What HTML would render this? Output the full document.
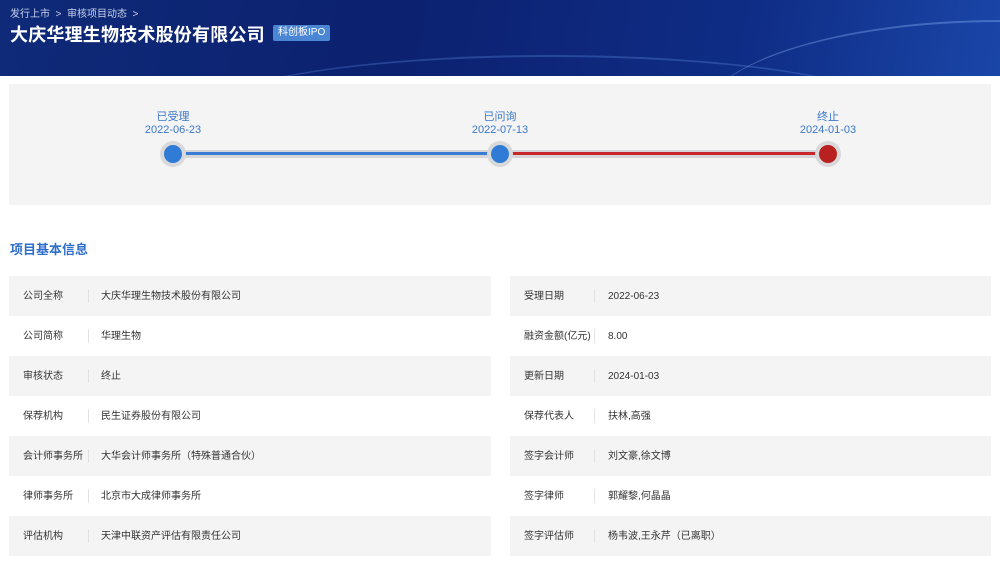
<!DOCTYPE html>
<html><head><meta charset="utf-8"><style>
*{margin:0;padding:0;box-sizing:border-box}
body{width:1000px;height:567px;overflow:hidden;background:#fff;font-family:"Liberation Sans","Noto Sans CJK SC",sans-serif;position:relative}
.hdr{position:absolute;left:0;top:0;width:1000px;height:76px;background:linear-gradient(100deg,#0e2a78 0%,#0c2170 40%,#0f2d86 75%,#1a46a8 100%);overflow:hidden}
.hdr .wave{position:absolute;border-radius:50%;border-top:2px solid rgba(120,170,255,.25)}
.bc{position:absolute;left:10px;top:5px;font-size:10px;color:#c8d2ee}
.title{position:absolute;left:10px;top:21px;font-size:18px;font-weight:bold;color:#fff;letter-spacing:0.2px}
.tag{position:absolute;left:273px;top:25px;height:16px;padding:0 5px;background:#4a86d4;color:#fff;font-size:10px;line-height:16px;border-radius:2px}
.tl{position:absolute;left:9px;top:84px;width:982px;height:121px;background:#f4f4f5}
.lab{position:absolute;font-size:11px;color:#3a77c9;text-align:center;line-height:13px;width:100px}
.band{position:absolute;top:150px;height:8px;background:#d6d6d8}
.line{position:absolute;top:152px;height:3px}
.dot{position:absolute;width:18px;height:18px;border-radius:50%;top:145px;box-shadow:0 0 0 4px #d9d9db}
.sec{position:absolute;left:10px;top:239px;font-size:13px;font-weight:bold;color:#2f6fca}
.row{position:absolute;height:40px;font-size:10px;color:#333;line-height:42px}
.row.s{background:#f4f4f4}
.row .k{position:absolute;left:14px}
.row .d{position:absolute;top:13px;width:1px;height:14px;background:#e2e2e2}
.row .v{position:absolute}
</style></head><body>
<div class="hdr">
<div class="wave" style="left:200px;top:55px;width:700px;height:120px"></div>
<div class="wave" style="left:700px;top:20px;width:600px;height:200px;border-top-color:rgba(150,190,255,.35)"></div>
<div class="bc">发行上市 &nbsp;&gt;&nbsp; 审核项目动态 &nbsp;&gt;</div>
<div class="title">大庆华理生物技术股份有限公司</div>
<div class="tag">科创板IPO</div>
</div>
<div class="tl"></div>
<div class="lab" style="left:123px;top:111px">已受理<br>2022-06-23</div>
<div class="lab" style="left:450px;top:111px">已问询<br>2022-07-13</div>
<div class="lab" style="left:778px;top:111px">终止<br>2024-01-03</div>
<div class="band" style="left:170px;width:660px"></div>
<div class="line" style="left:173px;width:327px;background:#3a7bd5"></div>
<div class="line" style="left:500px;width:328px;background:#c9262c"></div>
<div class="dot" style="left:164px;background:#2f7bd6"></div>
<div class="dot" style="left:491px;background:#2f7bd6"></div>
<div class="dot" style="left:819px;background:#b8211f"></div>
<div class="sec">项目基本信息</div>

<div class="row s" style="left:9px;top:276px;width:482px"><span class="k">公司全称</span><span class="d" style="left:79px"></span><span class="v" style="left:92px">大庆华理生物技术股份有限公司</span></div>
<div class="row" style="left:9px;top:316px;width:482px"><span class="k">公司简称</span><span class="d" style="left:79px"></span><span class="v" style="left:92px">华理生物</span></div>
<div class="row s" style="left:9px;top:356px;width:482px"><span class="k">审核状态</span><span class="d" style="left:79px"></span><span class="v" style="left:92px">终止</span></div>
<div class="row" style="left:9px;top:396px;width:482px"><span class="k">保荐机构</span><span class="d" style="left:79px"></span><span class="v" style="left:92px">民生证券股份有限公司</span></div>
<div class="row s" style="left:9px;top:436px;width:482px"><span class="k">会计师事务所</span><span class="d" style="left:79px"></span><span class="v" style="left:92px">大华会计师事务所（特殊普通合伙）</span></div>
<div class="row" style="left:9px;top:476px;width:482px"><span class="k">律师事务所</span><span class="d" style="left:79px"></span><span class="v" style="left:92px">北京市大成律师事务所</span></div>
<div class="row s" style="left:9px;top:516px;width:482px"><span class="k">评估机构</span><span class="d" style="left:79px"></span><span class="v" style="left:92px">天津中联资产评估有限责任公司</span></div>

<div class="row s" style="left:510px;top:276px;width:481px"><span class="k">受理日期</span><span class="d" style="left:84px"></span><span class="v" style="left:98px">2022-06-23</span></div>
<div class="row" style="left:510px;top:316px;width:481px"><span class="k">融资金额(亿元)</span><span class="d" style="left:84px"></span><span class="v" style="left:98px">8.00</span></div>
<div class="row s" style="left:510px;top:356px;width:481px"><span class="k">更新日期</span><span class="d" style="left:84px"></span><span class="v" style="left:98px">2024-01-03</span></div>
<div class="row" style="left:510px;top:396px;width:481px"><span class="k">保荐代表人</span><span class="d" style="left:84px"></span><span class="v" style="left:98px">扶林,高强</span></div>
<div class="row s" style="left:510px;top:436px;width:481px"><span class="k">签字会计师</span><span class="d" style="left:84px"></span><span class="v" style="left:98px">刘文豪,徐文博</span></div>
<div class="row" style="left:510px;top:476px;width:481px"><span class="k">签字律师</span><span class="d" style="left:84px"></span><span class="v" style="left:98px">郭耀黎,何晶晶</span></div>
<div class="row s" style="left:510px;top:516px;width:481px"><span class="k">签字评估师</span><span class="d" style="left:84px"></span><span class="v" style="left:98px">杨韦波,王永芹（已离职）</span></div>
</body></html>
